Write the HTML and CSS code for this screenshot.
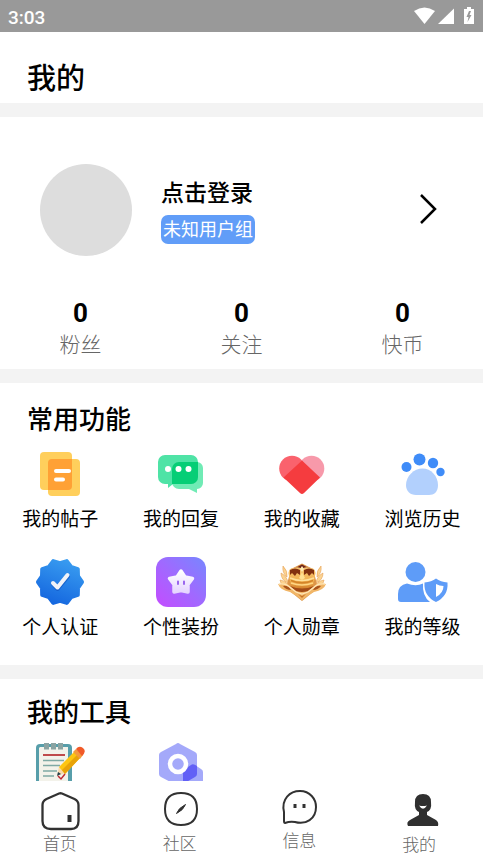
FILE: index.html
```html
<!DOCTYPE html>
<html lang="zh-CN">

<head>
    <meta charset="UTF-8">
    <meta name="viewport" content="width=device-width, initial-scale=1.0">
    <title>我的</title>
    <link rel="stylesheet" href="styles.css">
</head>

<body>
    <div class="status-bar">
        <span>3:03</span>
        <svg class="status-icons" width="62" height="20" viewBox="0 0 62 20" fill="#fff">
            <path d="M1 4Q11.500-3 22 4L11.500 17Z" />
            <path d="M41 1.500V17H25Z" />
            <path fill-rule="evenodd" d="M51 2H54V0H58V2H61V17H51ZM56 4L53.500 10H55.500L54.500 15L58.500 8H56.500L58 4Z" />
        </svg>
    </div>

    <header class="title-bar">
        <h1>我的</h1>
    </header>

    <main class="content">
        <section class="panel profile">
            <a class="user" href="#login">
                <span class="avatar"></span>
                <span class="user-info">
                    <strong class="user-name">点击登录</strong>
                    <span class="user-group">未知用户组</span>
                </span>
                <svg width="18" height="32" viewBox="0 0 18 32" fill="none" stroke="#000" stroke-width="2.500">
                    <path d="M2 1L16 15L2 29" />
                </svg>
            </a>
            <div class="stats">
                <a href="#fans"><b>0</b><span>粉丝</span></a>
                <a href="#follow"><b>0</b><span>关注</span></a>
                <a href="#coins"><b>0</b><span>快币</span></a>
            </div>
        </section>

        <section class="panel">
            <h2>常用功能</h2>
            <nav class="menu">
                <a href="#posts">
                    <svg viewBox="0 0 50 50">
                        <rect x="5" y="3" width="32" height="38" rx="4" fill="#ffcf5c" />
                        <rect x="13" y="10" width="32" height="37" rx="4" fill="#ffcf5c" />
                        <path d="M17 10H37V37a4 4 0 0 1-4 4H13V14a4 4 0 0 1 4-4Z" fill="#ffa135" />
                        <path d="M21 22H34M21 30.500H28" stroke="#fff" stroke-width="4" stroke-linecap="round" />
                    </svg>
                    <span>我的帖子</span>
                </a>
                <a href="#replies">
                    <svg viewBox="0 0 50 50">
                        <path d="M23 13H41a6 6 0 0 1 6 6V34a6 6 0 0 1-6 6V44L33 40H23a7 7 0 0 1-7-7V20a7 7 0 0 1 7-7Z" fill="#70ebb5" />
                        <path d="M9 6H35a7 7 0 0 1 7 7V28a7 7 0 0 1-7 7H17L12 39V35H9a7 7 0 0 1-7-7V13a7 7 0 0 1 7-7Z" fill="#4fe3a6" />
                        <path d="M23 13H42V28a7 7 0 0 1-7 7H16V20a7 7 0 0 1 7-7Z" fill="#06ce76" />
                        <g fill="#fff">
                            <circle cx="12" cy="20" r="3" />
                            <circle cx="22.500" cy="20" r="3" />
                            <circle cx="32.500" cy="20" r="3" />
                        </g>
                    </svg>
                    <span>我的回复</span>
                </a>
                <a href="#favorites">
                    <svg viewBox="0 0 50 50">
                        <circle cx="34.500" cy="19.500" r="12.800" fill="#f799aa" />
                        <circle cx="15" cy="19.500" r="12.800" fill="#fa626d" />
                        <path d="M25 11.500L43 28.500L27 44Q25 46 23 44L6.500 28.500Z" fill="#f53c3f" />
                    </svg>
                    <span>我的收藏</span>
                </a>
                <a href="#history">
                    <svg viewBox="0 0 50 50">
                        <path d="M24.500 19.500C33 19.500 40 27 40 36C40 43 36 46 31 46H18C12 46 8 42 8 36C8 27 16 19.500 24.500 19.500Z" fill="#b2d0fd" />
                        <g fill="#3f8cf8">
                            <circle cx="8.500" cy="18" r="5" />
                            <circle cx="21.500" cy="10.500" r="6" />
                            <circle cx="35" cy="14" r="5.200" />
                            <circle cx="42.500" cy="23" r="4.200" />
                        </g>
                    </svg>
                    <span>浏览历史</span>
                </a>
                <a href="#verify">
                    <svg viewBox="0 0 50 50">
                        <defs>
                            <linearGradient id="badge" x1="0.700" y1="0" x2="0.300" y2="1">
                                <stop offset="0" stop-color="#389bf0" />
                                <stop offset="1" stop-color="#1567df" />
                            </linearGradient>
                        </defs>
                        <path d="M47 25L43 30.800L42.800 37.900L36 40.200L31.800 45.900L25 43.900L18.200 45.900L14 40.200L7.200 37.900L7 30.800L3 25L7 19.200L7.200 12.100L14 9.800L18.200 4.100L25 6.100L31.800 4.100L36 9.800L42.800 12.100L43 19.200Z" fill="url(#badge)" stroke="url(#badge)" stroke-width="4" stroke-linejoin="round" />
                        <path d="M18 27L22.500 32L33 19.500" fill="none" stroke="#0d50bd" stroke-width="4" stroke-linecap="round" stroke-linejoin="round" opacity=".6" />
                        <path d="M18 26L22.500 30.500L32.500 18" fill="none" stroke="#f1f3f8" stroke-width="4" stroke-linecap="round" stroke-linejoin="round" />
                    </svg>
                    <span>个人认证</span>
                </a>
                <a href="#dress">
                    <svg viewBox="0 0 50 50">
                        <defs>
                            <linearGradient id="dress" x1="0" y1="1" x2="1" y2="0">
                                <stop offset="0" stop-color="#c44cff" />
                                <stop offset=".5" stop-color="#a069ff" />
                                <stop offset="1" stop-color="#7787ff" />
                            </linearGradient>
                            <linearGradient id="star" x1="0" y1="0" x2="0" y2="1">
                                <stop offset="0" stop-color="#fff" />
                                <stop offset="1" stop-color="#e6d5ff" />
                            </linearGradient>
                        </defs>
                        <rect width="50" height="50" rx="12" fill="url(#dress)" />
                        <path d="M25 14L29 20L36.500 21.500L32 27.500L32 35L25 33.500L18 35L18 27.500L13.500 21.500L21 20Z" fill="url(#star)" stroke="url(#star)" stroke-width="3.500" stroke-linejoin="round" />
                        <path d="M22 24.500V27M28 24.500V27" stroke="#9b65ee" stroke-width="2" stroke-linecap="round" />
                    </svg>
                    <span>个性装扮</span>
                </a>
                <a href="#medals">
                    <svg viewBox="0 0 50 50">
                        <defs>
                            <linearGradient id="gold" x1="0" y1="0" x2="0" y2="1">
                                <stop offset="0" stop-color="#f6c272" />
                                <stop offset=".6" stop-color="#f2b252" />
                                <stop offset="1" stop-color="#cf7a26" />
                            </linearGradient>
                        </defs>
                        <path d="M25 6.500L36 12L41 31L25 44L9 31L14 12Z" fill="#dd9548" />
                        <path d="M25 7.500L33 12H17Z" fill="#6b2118" />
                        <g fill="#fbd391" stroke="#e6a052" stroke-width=".6">
                            <path d="M6 9Q11 14 10 20Q5 16 6 9ZM4 16Q10 19 11 26Q4 23 4 16ZM3 23Q10 24 13 31Q4 30 3 23Z" />
                            <path d="M44 9Q39 14 40 20Q45 16 44 9ZM46 16Q40 19 39 26Q46 23 46 16ZM47 23Q40 24 37 31Q46 30 47 23Z" />
                        </g>
                        <path d="M14 30L12 19Q10 11 17 11Q22 9 25 12Q28 9 33 11Q40 11 38 19L36 30Q25 35 14 30Z" fill="url(#gold)" />
                        <path d="M13 13Q18 10 23 13V18L20 16L18 19L15 16L13 18ZM37 13Q32 10 27 13V18L30 16L32 19L35 16L37 18Z" fill="#82300f" />
                        <path d="M25 9L27 12L25 15L23 12Z" fill="#ffebb2" />
                        <path d="M25 15L28 21L25 23L22 21Z" fill="#ffdf91" />
                        <path d="M13 21Q25 26 37 21" fill="none" stroke="#ffe09a" stroke-width="1.500" />
                        <path d="M14 23.500Q25 28 36 23.500" fill="none" stroke="#d48428" stroke-width="1.500" />
                        <path d="M14 26Q25 30 36 26" fill="none" stroke="#ffd683" stroke-width="1.500" />
                        <path d="M13 29Q25 34 37 29L34 34Q25 37 16 34Z" fill="#a24b17" />
                        <path d="M1 27Q8 25 14 30L19 34Q25 36 31 34L36 30Q42 25 49 27Q47 33 37 35Q31 38 25 43.500Q19 38 13 35Q3 33 1 27Z" fill="#f1b668" />
                        <path d="M6 29Q11 28 14 33Q9 33 6 29ZM44 29Q39 28 36 33Q41 33 44 29Z" fill="#a9531b" />
                        <path d="M2 27Q9 26 14 31L19 35L25 37L31 35L36 31Q41 26 48 27" fill="none" stroke="#ffe7b8" stroke-width="1.300" />
                        <path d="M21 37L25 39L29 37L25 41Z" fill="#c77426" />
                    </svg>
                    <span>个人勋章</span>
                </a>
                <a href="#level">
                    <svg viewBox="0 0 50 50" fill="#5e9cf8">
                        <circle cx="17.500" cy="15" r="10" />
                        <path d="M9 26.500Q18 30 25 26.500Q24 39 32 45H3Q0 45 0 42V37Q0 28 9 26.500Z" />
                        <path fill-rule="evenodd" d="M38 21.500Q42.500 25 49.500 25.500Q50.500 39 38 45Q25.500 39 26.500 25.500Q33.500 25 38 21.500ZM38 27V40Q45.500 36 45.500 29Q41.500 29 38 27Z" />
                    </svg>
                    <span>我的等级</span>
                </a>
            </nav>
        </section>

        <section class="panel tools">
            <h2>我的工具</h2>
            <nav class="menu">
                <a href="#notes" aria-label="笔记">
                    <svg viewBox="0 0 50 50">
                        <rect x="1" y="2" width="36" height="48" rx="4" fill="#579eaa" />
                        <path d="M5 5H33V50H4V6Z" fill="#f3f2ea" />
                        <path d="M9 1h5v6.500H9zM16 1h5v6.500H16zM23 1h5v6.500H23z" fill="#8aa3a2" />
                        <path d="M8 13H30" stroke="#bf4a4b" stroke-width="2" />
                        <path d="M8 18.500H29M8 23.500H25M8 29H22M8 34H19" stroke="#7fa9a4" stroke-width="1.300" />
                        <path d="M22 34L24 25L30 31Z" fill="#f8d9ab" />
                        <path d="M24 25L39 10L45 16L30 32Z" fill="#fdc511" />
                        <path d="M27 28L42 13L45 16L30 32Z" fill="#e8a308" />
                        <path d="M38 10L41 7L48 13L45 17Z" fill="#f49a3d" />
                        <path d="M41 7Q44 3 48 6Q52 9 47 14Z" fill="#f15a28" />
                        <path d="M22 34L23 30L26 32Z" fill="#213f50" />
                        <path d="M23 34L26 37L30 32" fill="none" stroke="#bd2933" stroke-width="1.500" />
                    </svg>
                </a>
                <a href="#settings" aria-label="设置">
                    <svg viewBox="0 0 50 50">
                        <path d="M20 2Q22 0 24 2L39 10Q41 11 41 13V32Q41 34 39 35L22 44L5 35Q3 34 3 32V13Q3 11 5 10Z" fill="#a4a9fa" />
                        <path d="M35 23Q37 21 39 23L45 27Q47 28 47 30V40L37 45L27 40V30Q27 28 29 27Z" fill="#a4a9fa" />
                        <path d="M35 23Q37 21 41 24V32Q41 34 39 35L27 42V30Q27 28 29 27Z" fill="#6260f6" />
                        <circle cx="22" cy="22" r="8" fill="none" stroke="#fff" stroke-width="4.500" />
                    </svg>
                </a>
            </nav>
        </section>
    </main>

    <nav class="tab-bar">
        <a href="#home">
            <svg width="40" height="40" viewBox="0 0 40 40" fill="none" stroke="#323232" stroke-width="2.300">
                <path d="M19 1.500Q20.500 1 22 1.500L34.500 7Q38.500 9 38.500 13V29Q38.500 37 31 37H11Q2.500 37 2.500 29V13Q2.500 9 6.500 7Z" />
                <path d="M29.500 23V30" stroke-width="4" />
            </svg>
            <span>首页</span>
        </a>
        <a href="#community">
            <svg width="36" height="40" viewBox="0 0 36 40" fill="none" stroke="#323232" stroke-width="2">
                <path d="M19 1C30 1 35 6 35 17C35 28 30 33 19 33C8 33 3 28 3 17C3 6 8 1 19 1Z" />
                <path d="M14.500 21.500Q16.500 16 23.500 12.500Q21.500 18 14.500 21.500Z" fill="#323232" stroke="#323232" stroke-width="1" />
            </svg>
            <span>社区</span>
        </a>
        <a href="#messages">
            <svg width="36" height="37" viewBox="0 0 36 37" fill="none" stroke="#323232" stroke-width="2">
                <path d="M3 20C0 7 9 -1 19 -1C29 -1 35 7 35 15C35 27 25 33 14 30Q9 29 4 31Q3 31 3 29Z" />
                <path d="M14 12V16M23 12V16" stroke-width="3" />
            </svg>
            <span>信息</span>
        </a>
        <a href="#me">
            <svg width="40" height="41" viewBox="0 0 40 41" fill="#303030">
                <path fill-rule="evenodd" d="M24 2Q32 2 32 10Q33 18 28 20V23L37 28Q40 30 39 34H9Q7 30 11 28L20 23V20Q15 18 16 10Q16 2 24 2ZM20 13.500Q24 20 28 13.500Q24 14.500 20 13.500Z" />
            </svg>
            <span>我的</span>
        </a>
    </nav>
</body>

</html>
```
FILE: styles.css
```css
* {
    box-sizing: border-box;
}

body {
    display: flex;
    flex-direction: column;
    height: 100vh;
    margin: 0;
    background-color: #fff;
    color: #000;
    font-family: Roboto, "Noto Sans CJK SC", sans-serif;
}

a {
    color: inherit;
    text-decoration: none;
}

svg {
    display: block;
    flex-shrink: 0;
    overflow: visible;
}

h1,
h2 {
    margin: 0;
    font-weight: 500;
}

.status-bar {
    display: flex;
    flex-shrink: 0;
    align-items: center;
    justify-content: space-between;
    height: 32px;
    padding: 2px 8px 0;
    background-color: #999;
    color: #fff;
    font-size: 19px;
    font-weight: 500;
}

.title-bar {
    flex-shrink: 0;
    padding: 27px 27px 4px;
}

h1 {
    font-size: 29px;
    line-height: 40px;
}

.content {
    flex: 1;
    min-height: 0;
    overflow: hidden;
}

.panel {
    padding-bottom: 23px;
    border-top: 14px solid #f3f3f3;
}

.profile {
    padding: 47px 0 9px;
}

.user {
    display: flex;
    align-items: center;
    padding: 0 46px 0 40px;
}

.avatar {
    width: 92px;
    height: 92px;
    margin-right: 29px;
    border-radius: 50%;
    background-color: #ddd;
}

.user-info {
    display: flex;
    flex: 1;
    flex-direction: column;
    align-items: flex-start;
    padding-top: 4px;
}

.user-name {
    font-size: 23px;
    font-weight: 500;
    line-height: 34px;
}

.user-group {
    margin: 4px 0;
    padding: 0 2px;
    border-radius: 7px;
    background-color: #619df8;
    color: #fff;
    font-size: 18px;
    line-height: 29px;
}

.stats {
    display: grid;
    grid-template-columns: repeat(3, 1fr);
    margin-top: 41px;
}

.stats a {
    display: flex;
    flex-direction: column;
    align-items: center;
}

.stats b {
    font-size: 26px;
    line-height: 33px;
}

.stats span {
    color: #666;
    font-size: 21px;
    font-weight: 300;
    line-height: 30px;
}

h2 {
    padding: 19px 27px 11px;
    font-size: 26px;
    line-height: 36px;
}

.tools h2 {
    padding-top: 16px;
}

.menu {
    display: grid;
    grid-template-columns: repeat(4, 1fr);
    row-gap: 23px;
}

.menu a {
    display: flex;
    flex-direction: column;
    align-items: center;
    gap: 7px;
    font-size: 19px;
    line-height: 28px;
}

.menu svg {
    width: 50px;
    height: 50px;
}

.tab-bar {
    display: grid;
    flex-shrink: 0;
    grid-template-columns: repeat(4, 1fr);
    padding: 11px 4px 3px 0;
    background-color: #fff;
}

.tab-bar a {
    display: flex;
    flex-direction: column;
    align-items: center;
    color: #666;
    font-size: 17px;
    font-weight: 300;
    line-height: 24px;
}
```
